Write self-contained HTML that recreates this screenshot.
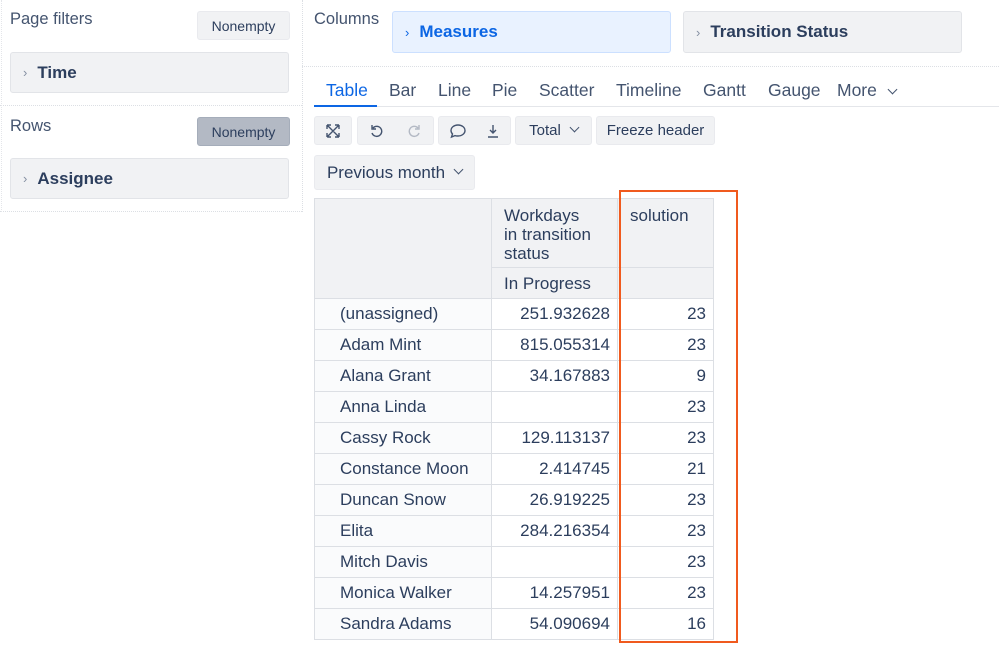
<!DOCTYPE html>
<html><head><meta charset="utf-8"><style>
*{box-sizing:border-box;margin:0;padding:0}
body{width:999px;height:663px;background:#fff;font-family:"Liberation Sans",sans-serif;color:#2c3e5d;position:relative;overflow:hidden}
.a{position:absolute}
.lbl{font-size:16px;color:#44546f}
.btn{position:absolute;background:#f1f2f4;border:1px solid #e9eaee;border-radius:3px;font-size:14px;color:#2c3e5d;display:flex;align-items:center;justify-content:center}
.box{position:absolute;background:#f1f2f4;border:1px solid #e2e4e8;border-radius:3px;font-size:17px;font-weight:bold;color:#2c3e5d;display:flex;align-items:center;padding-left:12px}
.box .ch{font-weight:normal;color:#8590a2;font-size:13px;margin-right:10px}
.tab{position:absolute;top:80px;font-size:17.5px;color:#44546f}
table{position:absolute;left:314px;top:198px;border-collapse:collapse;font-size:17px;color:#2c3e5d;table-layout:fixed}
tr{height:31px}
td{border:1px solid #dcdfe4;padding:0 7px;line-height:20px}
th{border:1px solid #dcdfe4;background:#f1f2f4;font-weight:normal;text-align:left;vertical-align:top;padding:5px 12px 0}
td.n{text-align:right}
td.r{padding-left:25px;background:#fafbfc}
.cv{display:inline-block;width:7px;height:7px;border-right:1.3px solid #44546f;border-bottom:1.3px solid #44546f;transform:rotate(45deg);margin-left:10px;position:relative;top:-3px}
</style></head><body>
<div class="a" style="left:302px;top:0;height:212px;border-left:1px dotted #dcdfe4"></div>
<div class="a" style="left:0;top:105px;width:302px;border-top:1px dotted #dcdfe4"></div>
<div class="a" style="left:0;top:211px;width:302px;border-top:1px dotted #dcdfe4"></div>
<div class="a" style="left:302px;top:66px;width:697px;border-top:1px dotted #dcdfe4"></div>
<div class="a" style="left:1px;top:0;height:212px;border-left:1px dotted #e4e6ea"></div>

<div class="a lbl" style="left:10px;top:10px;font-size:16.5px">Page filters</div>
<div class="btn" style="left:197px;top:11px;width:93px;height:29px">Nonempty</div>
<div class="box" style="left:10px;top:52px;width:279px;height:41px"><span class="ch">›</span>Time</div>
<div class="a lbl" style="left:10px;top:117px;font-size:16.5px">Rows</div>
<div class="btn" style="left:197px;top:117px;width:93px;height:29px;background:#b3b9c4;border-color:#a5adba">Nonempty</div>
<div class="box" style="left:10px;top:158px;width:279px;height:41px"><span class="ch">›</span>Assignee</div>

<div class="a lbl" style="left:314px;top:10px;font-size:16.5px">Columns</div>
<div class="box" style="left:392px;top:11px;width:279px;height:42px;background:#e9f2ff;border-color:#cce0ff;color:#0c66e4"><span class="ch" style="color:#0c66e4">›</span>Measures</div>
<div class="box" style="left:683px;top:11px;width:279px;height:42px"><span class="ch">›</span>Transition Status</div>

<div class="a" style="left:314px;top:106px;width:685px;border-top:1px solid #e4e6ea"></div>
<div class="a" style="left:314px;top:105px;width:63px;border-top:2px solid #0c66e4"></div>
<div class="tab" style="left:326px;color:#0c66e4">Table</div>
<div class="tab" style="left:389px">Bar</div>
<div class="tab" style="left:438px">Line</div>
<div class="tab" style="left:492px">Pie</div>
<div class="tab" style="left:539px">Scatter</div>
<div class="tab" style="left:616px">Timeline</div>
<div class="tab" style="left:703px">Gantt</div>
<div class="tab" style="left:768px">Gauge</div>
<div class="tab" style="left:837px">More<span class="cv" style="margin-left:12px"></span></div>

<div class="btn" style="left:314px;top:116px;width:38px;height:29px"><svg width="16" height="16" viewBox="0 0 16 16" fill="none" stroke="#44546f" stroke-width="1.4"><path d="M2 2l12 12M14 2L2 14M2 2v4M2 2h4M14 2v4M14 2h-4M2 14v-4M2 14h4M14 14v-4M14 14h-4"/></svg></div>
<div class="btn" style="left:357px;top:116px;width:77px;height:29px;justify-content:space-around"><svg width="16" height="16" viewBox="0 0 16 16" fill="none" stroke="#44546f" stroke-width="1.4"><path d="M4 5a5 5 0 1 1-1 5M3 2v4h4"/></svg><svg width="16" height="16" viewBox="0 0 16 16" fill="none" stroke="#b3b9c4" stroke-width="1.4"><path d="M12 5a5 5 0 1 0 1 5M13 2v4h-4"/></svg></div>
<div class="btn" style="left:438px;top:116px;width:73px;height:29px;justify-content:space-around"><svg width="18" height="16" viewBox="0 0 18 16" fill="none" stroke="#44546f" stroke-width="1.4"><path d="M9 2c4 0 7 2.5 7 5.5S13 13 9 13c-1 0-2 0-3-.4L2.5 14l1-3C2.5 10 2 8.8 2 7.5 2 4.5 5 2 9 2z"/></svg><svg width="14" height="16" viewBox="0 0 14 16" fill="none" stroke="#44546f" stroke-width="1.4"><path d="M7 2v8M4 7l3 3 3-3M2 14h10"/></svg></div>
<div class="btn" style="left:515px;top:116px;width:77px;height:29px;font-size:15px">Total<span class="cv"></span></div>
<div class="btn" style="left:596px;top:116px;width:119px;height:29px;font-size:15px">Freeze header</div>
<div class="btn" style="left:314px;top:155px;width:161px;height:35px;font-size:17px">Previous month<span class="cv"></span></div>

<table>
<colgroup><col style="width:177px"><col style="width:126px"><col style="width:96px"></colgroup>
<tr style="height:69px"><th rowspan="2"></th><th style="line-height:19px;padding-top:7px">Workdays<br>in transition<br>status</th><th style="padding-top:7px">solution</th></tr>
<tr style="height:31px"><th style="padding-top:6px">In Progress</th><th></th></tr>
<tr><td class="r">(unassigned)</td><td class="n">251.932628</td><td class="n">23</td></tr>
<tr><td class="r">Adam Mint</td><td class="n">815.055314</td><td class="n">23</td></tr>
<tr><td class="r">Alana Grant</td><td class="n">34.167883</td><td class="n">9</td></tr>
<tr><td class="r">Anna Linda</td><td class="n"></td><td class="n">23</td></tr>
<tr><td class="r">Cassy Rock</td><td class="n">129.113137</td><td class="n">23</td></tr>
<tr><td class="r">Constance Moon</td><td class="n">2.414745</td><td class="n">21</td></tr>
<tr><td class="r">Duncan Snow</td><td class="n">26.919225</td><td class="n">23</td></tr>
<tr><td class="r">Elita</td><td class="n">284.216354</td><td class="n">23</td></tr>
<tr><td class="r">Mitch Davis</td><td class="n"></td><td class="n">23</td></tr>
<tr><td class="r">Monica Walker</td><td class="n">14.257951</td><td class="n">23</td></tr>
<tr><td class="r">Sandra Adams</td><td class="n">54.090694</td><td class="n">16</td></tr>
</table>
<div class="a" style="left:619px;top:190px;width:119px;height:453px;border:2px solid #f05a1e"></div>
</body></html>
